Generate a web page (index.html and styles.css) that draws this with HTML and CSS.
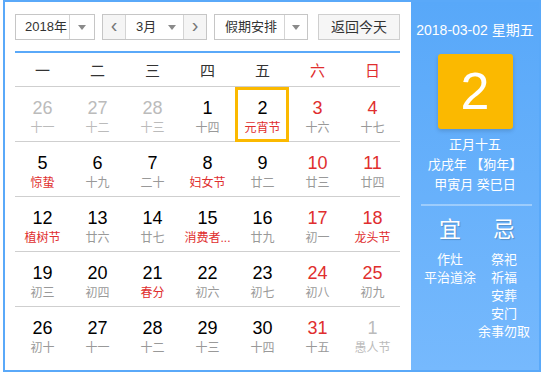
FILE: index.html
```html
<!DOCTYPE html>
<html lang="zh-CN">
<head>
    <meta charset="UTF-8">
    <title>万年历</title>
    <link rel="stylesheet" href="styles.css">
</head>
<body>
    <div class="calendar">
        <div class="main">
            <div class="toolbar">
                <div class="select year-select">
                    <span class="select-text">2018年</span>
                    <span class="select-arrow"><i class="caret"></i></span>
                </div>
                <div class="month-group">
                    <span class="nav-btn">&lsaquo;</span>
                    <div class="month-select">
                        <span class="select-text">3月</span>
                        <i class="caret"></i>
                    </div>
                    <span class="nav-btn">&rsaquo;</span>
                </div>
                <div class="select holiday-select">
                    <span class="select-text">假期安排</span>
                    <span class="select-arrow"><i class="caret"></i></span>
                </div>
                <span class="today-btn">返回今天</span>
            </div>

            <div class="weekdays">
                <span>一</span><span>二</span><span>三</span><span>四</span><span>五</span>
                <span class="weekend">六</span><span class="weekend">日</span>
            </div>

            <div class="days">
                <div class="week">
                    <div class="day other"><b>26</b><em>十一</em></div>
                    <div class="day other"><b>27</b><em>十二</em></div>
                    <div class="day other"><b>28</b><em>十三</em></div>
                    <div class="day"><b>1</b><em>十四</em></div>
                    <div class="day selected"><b>2</b><em class="festival">元宵节</em></div>
                    <div class="day weekend"><b>3</b><em>十六</em></div>
                    <div class="day weekend"><b>4</b><em>十七</em></div>
                </div>
                <div class="week">
                    <div class="day"><b>5</b><em class="festival">惊蛰</em></div>
                    <div class="day"><b>6</b><em>十九</em></div>
                    <div class="day"><b>7</b><em>二十</em></div>
                    <div class="day"><b>8</b><em class="festival">妇女节</em></div>
                    <div class="day"><b>9</b><em>廿二</em></div>
                    <div class="day weekend"><b>10</b><em>廿三</em></div>
                    <div class="day weekend"><b>11</b><em>廿四</em></div>
                </div>
                <div class="week">
                    <div class="day"><b>12</b><em class="festival">植树节</em></div>
                    <div class="day"><b>13</b><em>廿六</em></div>
                    <div class="day"><b>14</b><em>廿七</em></div>
                    <div class="day"><b>15</b><em class="festival">消费者...</em></div>
                    <div class="day"><b>16</b><em>廿九</em></div>
                    <div class="day weekend"><b>17</b><em>初一</em></div>
                    <div class="day weekend"><b>18</b><em class="festival">龙头节</em></div>
                </div>
                <div class="week">
                    <div class="day"><b>19</b><em>初三</em></div>
                    <div class="day"><b>20</b><em>初四</em></div>
                    <div class="day"><b>21</b><em class="festival">春分</em></div>
                    <div class="day"><b>22</b><em>初六</em></div>
                    <div class="day"><b>23</b><em>初七</em></div>
                    <div class="day weekend"><b>24</b><em>初八</em></div>
                    <div class="day weekend"><b>25</b><em>初九</em></div>
                </div>
                <div class="week">
                    <div class="day"><b>26</b><em>初十</em></div>
                    <div class="day"><b>27</b><em>十一</em></div>
                    <div class="day"><b>28</b><em>十二</em></div>
                    <div class="day"><b>29</b><em>十三</em></div>
                    <div class="day"><b>30</b><em>十四</em></div>
                    <div class="day weekend"><b>31</b><em>十五</em></div>
                    <div class="day other"><b>1</b><em>愚人节</em></div>
                </div>
            </div>
        </div>

        <div class="side">
            <div class="side-date">2018-03-02 星期五</div>
            <div class="big-day">2</div>
            <div class="lunar">
                <p>正月十五</p>
                <p>戊戌年 【狗年】</p>
                <p>甲寅月 癸巳日</p>
            </div>
            <div class="side-line"></div>
            <div class="almanac">
                <div class="almanac-col">
                    <h3>宜</h3>
                    <p>作灶</p>
                    <p>平治道涂</p>
                </div>
                <div class="almanac-col">
                    <h3>忌</h3>
                    <p>祭祀</p>
                    <p>祈福</p>
                    <p>安葬</p>
                    <p>安门</p>
                    <p>余事勿取</p>
                </div>
            </div>
        </div>
    </div>
</body>
</html>
```

FILE: styles.css
```css
body {
    margin: 0;
    padding: 0 0 0 3px;
    font-family: "Liberation Sans", Arial, "Noto Sans CJK SC", sans-serif;
    background: white;
}
.calendar {
    display: flex;
    width: 538px;
    height: 372px;
    box-sizing: border-box;
    border: 2px solid #5aa9f9;
    background: white;
}
.main {
    width: 406px;
    padding: 12px 11px 0 10px;
    box-sizing: border-box;
}

/* 工具栏 */
.toolbar {
    display: flex;
    height: 26px;
    font-size: 13px;
    color: #333;
    white-space: nowrap;
}
.select {
    display: flex;
    height: 26px;
    box-sizing: border-box;
    border: 1px solid #c6c6c6;
    background: white;
}
.select-text {
    flex: 1;
    line-height: 24px;
    padding-left: 10px;
}
.select-arrow {
    width: 24px;
    border-left: 1px solid #d4d4d4;
    display: flex;
    align-items: center;
    justify-content: center;
}
.caret {
    width: 0;
    height: 0;
    border-left: 4px solid transparent;
    border-right: 4px solid transparent;
    border-top: 5px solid #8a8a8a;
}
.year-select {
    width: 80px;
}
.year-select .select-text {
    padding-left: 9px;
}
.month-group {
    display: flex;
    width: 105px;
    height: 26px;
    box-sizing: border-box;
    border: 1px solid #c6c6c6;
    margin-left: 7px;
}
.nav-btn {
    width: 22px;
    background: #f5f5f5;
    color: #777;
    font-size: 20px;
    line-height: 21px;
    text-align: center;
}
.month-select {
    flex: 1;
    display: flex;
    align-items: center;
    padding-right: 7px;
    border-left: 1px solid #d4d4d4;
    border-right: 1px solid #d4d4d4;
    background: white;
}
.holiday-select {
    width: 94px;
    margin-left: 7px;
}
.holiday-select .select-text {
    padding-left: 10px;
}
.holiday-select .select-arrow {
    width: 22px;
}
.today-btn {
    width: 82px;
    margin-left: 10px;
    height: 26px;
    box-sizing: border-box;
    border: 1px solid #cfcfcf;
    background: #f6f6f6;
    text-align: center;
    line-height: 24px;
    font-size: 14px;
}

/* 星期 */
.weekdays {
    display: grid;
    grid-template-columns: repeat(7, 55px);
    margin-top: 11px;
    border-top: 2px solid #5aa9f9;
    border-bottom: 1px solid #cfcfcf;
    height: 33px;
    line-height: 35px;
    font-size: 15px;
    color: #333;
    text-align: center;
}
.weekdays .weekend {
    color: #e02e2e;
}

/* 日期 */
.week {
    display: grid;
    grid-template-columns: repeat(7, 55px);
    height: 54px;
    border-bottom: 1px solid #cfcfcf;
}
.week:last-child {
    border-bottom: none;
}
.day {
    text-align: center;
    position: relative;
}
.day b {
    display: block;
    margin-top: 11px;
    font-size: 18px;
    font-weight: normal;
    line-height: 20px;
    color: #000;
}
.day em {
    display: block;
    margin-top: 2px;
    font-style: normal;
    font-size: 12px;
    line-height: 16px;
    color: #999;
}
.day.weekend b {
    color: #e02e2e;
}
.day em.festival {
    color: #e02e2e;
}
.day.other b {
    color: #bbb;
}
.day.other em {
    color: #bbb;
}
.day.selected::after {
    content: "";
    position: absolute;
    left: 0;
    right: 1px;
    top: 0;
    bottom: -1px;
    border: 3px solid #fbb900;
}

/* 右侧 */
.side {
    flex: 1;
    background: linear-gradient(180deg, #58a8f9 0%, #76b9fd 100%);
    color: white;
    text-align: center;
    padding-top: 19px;
}
.side-date {
    font-size: 14px;
    line-height: 18px;
}
.big-day {
    width: 75px;
    height: 75px;
    margin: 15px auto 0;
    background: #fbb900;
    border-radius: 3px;
    box-shadow: 0 2px 4px rgba(0, 0, 0, 0.15);
    font-size: 52px;
    line-height: 75px;
}
.lunar {
    margin-top: 6px;
    font-size: 13px;
    line-height: 20px;
}
.lunar p {
    margin: 0;
}
.side-line {
    height: 2px;
    margin: 9px 7px 0 10px;
    background: rgba(255, 255, 255, 0.35);
}
.almanac {
    display: flex;
    justify-content: center;
    margin-top: 11px;
    padding-left: 4px;
}
.almanac-col {
    width: 54px;
}
.almanac h3 {
    margin: 0 0 8px;
    font-size: 22px;
    font-weight: normal;
    line-height: 26px;
    text-shadow: 1px 1px 1px rgba(0, 0, 0, 0.2);
}
.almanac p {
    margin: 0;
    font-size: 13px;
    line-height: 18px;
    white-space: nowrap;
}
```
